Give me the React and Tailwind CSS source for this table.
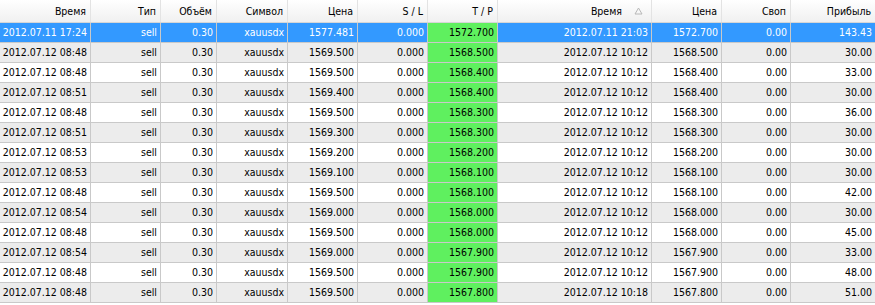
const cols = [
  { label: 'Время', w: 'w-[91px]' },
  { label: 'Тип', w: 'w-[70px]' },
  { label: 'Объём', w: 'w-[56px]' },
  { label: 'Символ', w: 'w-[71px]' },
  { label: 'Цена', w: 'w-[70px]' },
  { label: 'S / L', w: 'w-[70px]' },
  { label: 'T / P', w: 'w-[70px]' },
  { label: 'Время', w: 'w-[154px]', sort: true },
  { label: 'Цена', w: 'w-[70px]' },
  { label: 'Своп', w: 'w-[69px]' },
  { label: 'Прибыль', w: 'w-[84px]', last: true },
];

const rows = [
  ['2012.07.11 17:24', '1577.481', '1572.700', '2012.07.11 21:03', '143.43'],
  ['2012.07.12 08:48', '1569.500', '1568.500', '2012.07.12 10:12', '30.00'],
  ['2012.07.12 08:48', '1569.500', '1568.400', '2012.07.12 10:12', '33.00'],
  ['2012.07.12 08:51', '1569.400', '1568.400', '2012.07.12 10:12', '30.00'],
  ['2012.07.12 08:48', '1569.500', '1568.300', '2012.07.12 10:12', '36.00'],
  ['2012.07.12 08:51', '1569.300', '1568.300', '2012.07.12 10:12', '30.00'],
  ['2012.07.12 08:53', '1569.200', '1568.200', '2012.07.12 10:12', '30.00'],
  ['2012.07.12 08:53', '1569.100', '1568.100', '2012.07.12 10:12', '30.00'],
  ['2012.07.12 08:48', '1569.500', '1568.100', '2012.07.12 10:12', '42.00'],
  ['2012.07.12 08:54', '1569.000', '1568.000', '2012.07.12 10:12', '30.00'],
  ['2012.07.12 08:48', '1569.500', '1568.000', '2012.07.12 10:12', '45.00'],
  ['2012.07.12 08:54', '1569.000', '1567.900', '2012.07.12 10:12', '33.00'],
  ['2012.07.12 08:48', '1569.500', '1567.900', '2012.07.12 10:12', '48.00'],
  ['2012.07.12 08:48', '1569.500', '1567.800', '2012.07.12 10:18', '51.00'],
];

function SortMark() {
  return (
    <svg width="9" height="8" viewBox="0 0 9 8" className="ml-[12px] mr-[4px]">
      <path d="M4.5 1 L8 7 L1 7 Z" fill="none" stroke="#b8b8b8" strokeWidth="1" />
    </svg>
  );
}

function Header() {
  return (
    <div className="flex h-[23px] border-b border-[#d6d6d6] bg-gradient-to-b from-white to-[#f0f0f0]">
      {cols.map((c, i) => (
        <div
          key={i}
          className={`${c.w} shrink-0 flex items-center justify-end pr-[4px] ${c.last ? '' : 'border-r border-[#e3e3e3]'}`}
        >
          <span>{c.label}</span>
          {c.sort && <SortMark />}
        </div>
      ))}
    </div>
  );
}

function Row({ r, i }) {
  const selected = i === 0;
  const bg = selected ? 'bg-[#3399ff] text-white' : i % 2 ? 'bg-[#ececec]' : 'bg-white';
  const cells = [r[0], 'sell', '0.30', 'xauusdx', r[1], '0.000', r[2], r[3], r[2], '0.00', r[4]];
  return (
    <div className={`flex h-[20px] border-b border-[#c9c9c9] ${bg}`}>
      {cells.map((v, j) => (
        <div
          key={j}
          className={`${cols[j].w} shrink-0 flex items-center justify-end pr-[3px] ${cols[j].last ? '' : 'border-r border-[#c9c9c9]'} ${j === 6 ? 'bg-[#5ff05f] text-black' : ''}`}
        >
          {v}
        </div>
      ))}
    </div>
  );
}

export default function App() {
  return (
    <div className="w-[875px] h-[305px] overflow-hidden bg-white text-[10.5px] text-black font-['DejaVu_Sans_Condensed','Liberation_Sans',sans-serif] leading-none">
      <Header />
      {rows.map((r, i) => (
        <Row key={i} r={r} i={i} />
      ))}
    </div>
  );
}
